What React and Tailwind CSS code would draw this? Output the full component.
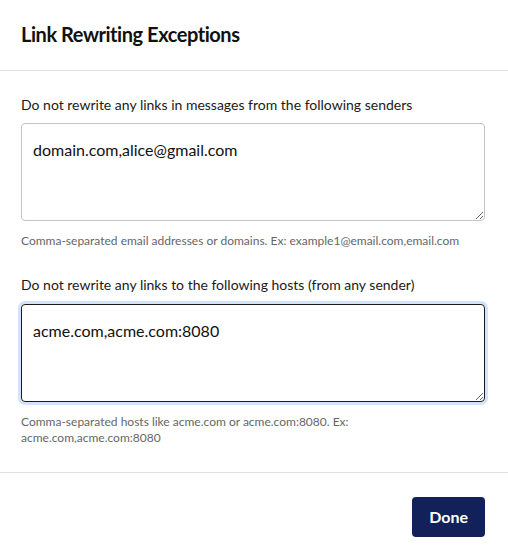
import React from 'react'

const App = () => {
  return (
    <div className="w-[508px] h-[559px] bg-white font-['Lato','Liberation_Sans',sans-serif] text-[#1a1a1a]">
      {/* Header */}
      <div className="pl-[21px] pr-[23px] pt-[22px] pb-[24px] border-b border-[#e0e0e0]">
        <h2 className="text-[20px] leading-[24px] font-bold tracking-[-0.45px] text-[#111]">Link Rewriting Exceptions</h2>
      </div>

      {/* Body */}
      <div className="pl-[21px] pr-[23px] pt-[24px] pb-[26px]">
        <label className="block text-[14px] leading-[20px] mb-2">
          Do not rewrite any links in messages from the following senders
        </label>
        <textarea
          defaultValue="domain.com,alice@gmail.com"
          className="block w-full h-[98px] rounded-[4px] border border-[#c4c4c4] px-[11px] pt-[14px] text-[16px] leading-[24px] text-[#111] outline-none"
        />
        <p className="mt-3 text-[12px] leading-[16px] text-[#666]">
          Comma-separated email addresses or domains. Ex: example1@email.com,email.com
        </p>

        <label className="block mt-[26px] text-[14px] leading-[20px] mb-[9px]">
          Do not rewrite any links to the following hosts (from any sender)
        </label>
        <textarea
          defaultValue="acme.com,acme.com:8080"
          className="block w-full h-[98px] rounded-[4px] border border-[#1a1a1a] ring-[3px] ring-[#d3e3fb] px-[11px] pt-[14px] text-[16px] leading-[24px] text-[#111] outline-none"
        />
        <p className="mt-3 text-[12px] leading-[16px] text-[#666] pr-[100px]">
          Comma-separated hosts like acme.com or acme.com:8080. Ex: acme.com,acme.com:8080
        </p>
      </div>

      {/* Footer */}
      <div className="border-t border-[#e0e0e0] pl-[21px] pr-[23px] py-6 flex justify-end">
        <button className="h-10 px-[17px] rounded-[4px] bg-[#12215a] text-white text-[16px] font-bold">
          Done
        </button>
      </div>
    </div>
  )
}

export default App
